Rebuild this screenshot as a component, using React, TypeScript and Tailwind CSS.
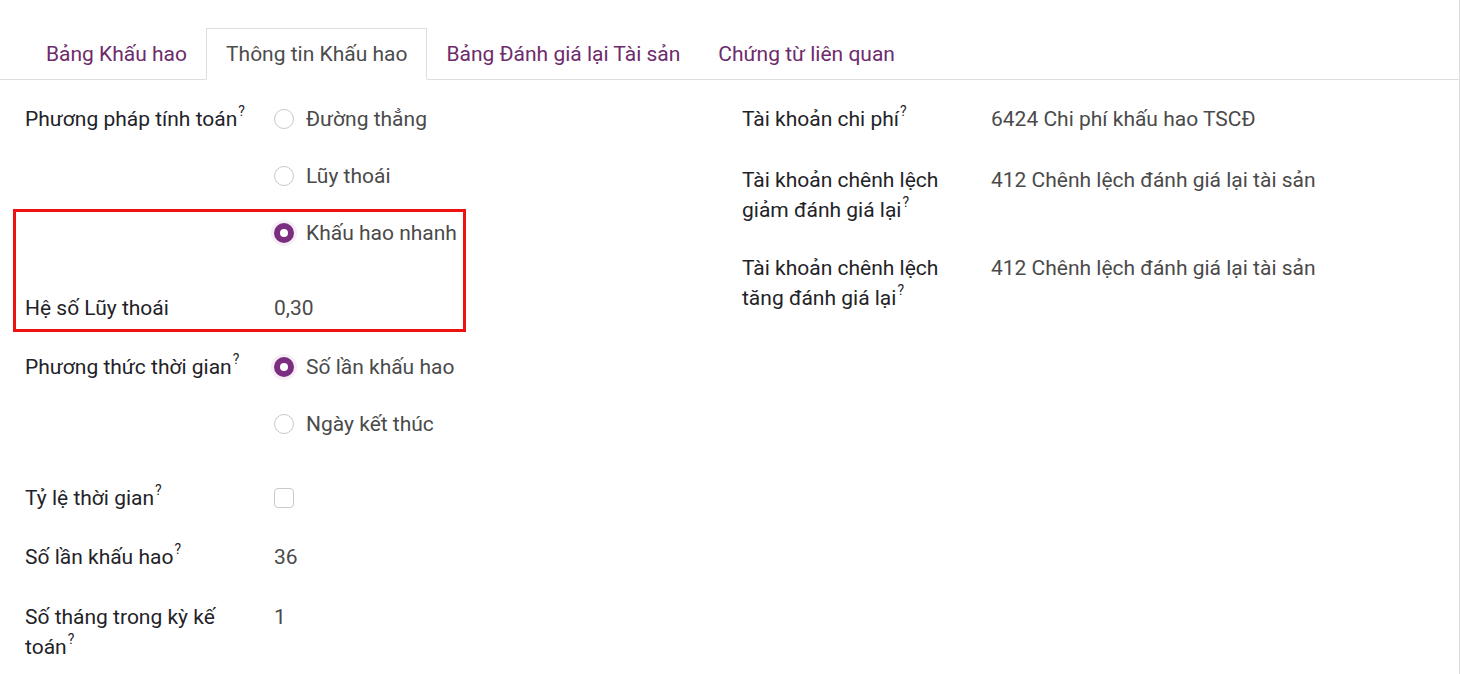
import React from 'react';

const font = { fontFamily: 'Roboto, "Noto Sans", sans-serif' };

const Help = () => (
  <sup className="relative -top-[2px] ml-[1px] align-super text-[14px] leading-none text-[#1f2328]">?</sup>
);

const Radio = ({ checked, label }: { checked?: boolean; label: string }) => (
  <div className="flex h-[30px] items-center">
    {checked ? (
      <span className="box-border h-[20px] w-[20px] rounded-full border-[6px] border-[#7b2d80] bg-white shadow-[0_0_0_3px_#f5eef5]" />
    ) : (
      <span className="box-border h-[20px] w-[20px] rounded-full border border-[#c9c9c9] bg-white" />
    )}
    <span className="ml-[12px] text-[#4a4a4a]">{label}</span>
  </div>
);

const Field = ({
  label,
  help = true,
  className = '',
  children,
}: {
  label: string;
  help?: boolean;
  className?: string;
  children: React.ReactNode;
}) => (
  <div className={`flex ${className}`}>
    <div className="w-[249px] shrink-0 pr-[14px] text-[#1f2328]">
      {label}
      {help && <Help />}
    </div>
    <div className="flex-1 text-[#4a4a4a]">{children}</div>
  </div>
);

const tabs = ['Bảng Khấu hao', 'Thông tin Khấu hao', 'Bảng Đánh giá lại Tài sản', 'Chứng từ liên quan'];

export default function App() {
  return (
    <div className="h-[674px] w-[1460px] overflow-hidden bg-white" style={font}>
      <div className="h-full border-r border-[#dedede] text-[21px] leading-[30px]">
        <div className="flex h-[80px] items-end border-b border-[#dedede] pl-[27px]">
          {tabs.map((t, i) =>
            i === 1 ? (
              <div
                key={t}
                className="-mb-px flex h-[52px] items-center border border-b-white border-[#dedede] bg-white px-[19px] text-[#4c4c4c]"
              >
                {t}
              </div>
            ) : (
              <div key={t} className="flex h-[51px] items-center px-[19px] text-[#6e2b6c]">
                {t}
              </div>
            ),
          )}
        </div>

        <div className="flex pl-[25px] pt-[24px]">
          <div className="w-[717px] shrink-0">
            <Field label="Phương pháp tính toán">
              <div className="flex flex-col gap-[27px]">
                <Radio label="Đường thẳng" />
                <Radio label="Lũy thoái" />
                <div className="h-[30px]" />
              </div>
            </Field>

            <div className="relative -mt-[30px]">
              <div className="absolute -left-[12px] -top-[9px] h-[123px] w-[453px] border-[3px] border-[#ee1111]" />
              <Field label="" help={false}>
                <Radio checked label="Khấu hao nhanh" />
              </Field>
              <Field label="Hệ số Lũy thoái" help={false} className="mt-[45px]">
                0,30
              </Field>
            </div>

            <Field label="Phương thức thời gian" className="mt-[29px]">
              <div className="flex flex-col gap-[27px]">
                <Radio checked label="Số lần khấu hao" />
                <Radio label="Ngày kết thúc" />
              </div>
            </Field>

            <Field label="Tỷ lệ thời gian" className="mt-[44px]">
              <div className="flex h-[30px] items-center">
                <span className="box-border h-[20px] w-[20px] rounded-[4px] border border-[#c9c9c9] bg-white" />
              </div>
            </Field>

            <Field label="Số lần khấu hao" className="mt-[29px]">
              36
            </Field>

            <Field label="Số tháng trong kỳ kế toán" className="mt-[30px]">
              1
            </Field>
          </div>

          <div className="w-[700px] shrink-0">
            <Field label="Tài khoản chi phí">6424 Chi phí khấu hao TSCĐ</Field>
            <Field label="Tài khoản chênh lệch giảm đánh giá lại" className="mt-[31px]">
              412 Chênh lệch đánh giá lại tài sản
            </Field>
            <Field label="Tài khoản chênh lệch tăng đánh giá lại" className="mt-[28px]">
              412 Chênh lệch đánh giá lại tài sản
            </Field>
          </div>
        </div>
      </div>
    </div>
  );
}
